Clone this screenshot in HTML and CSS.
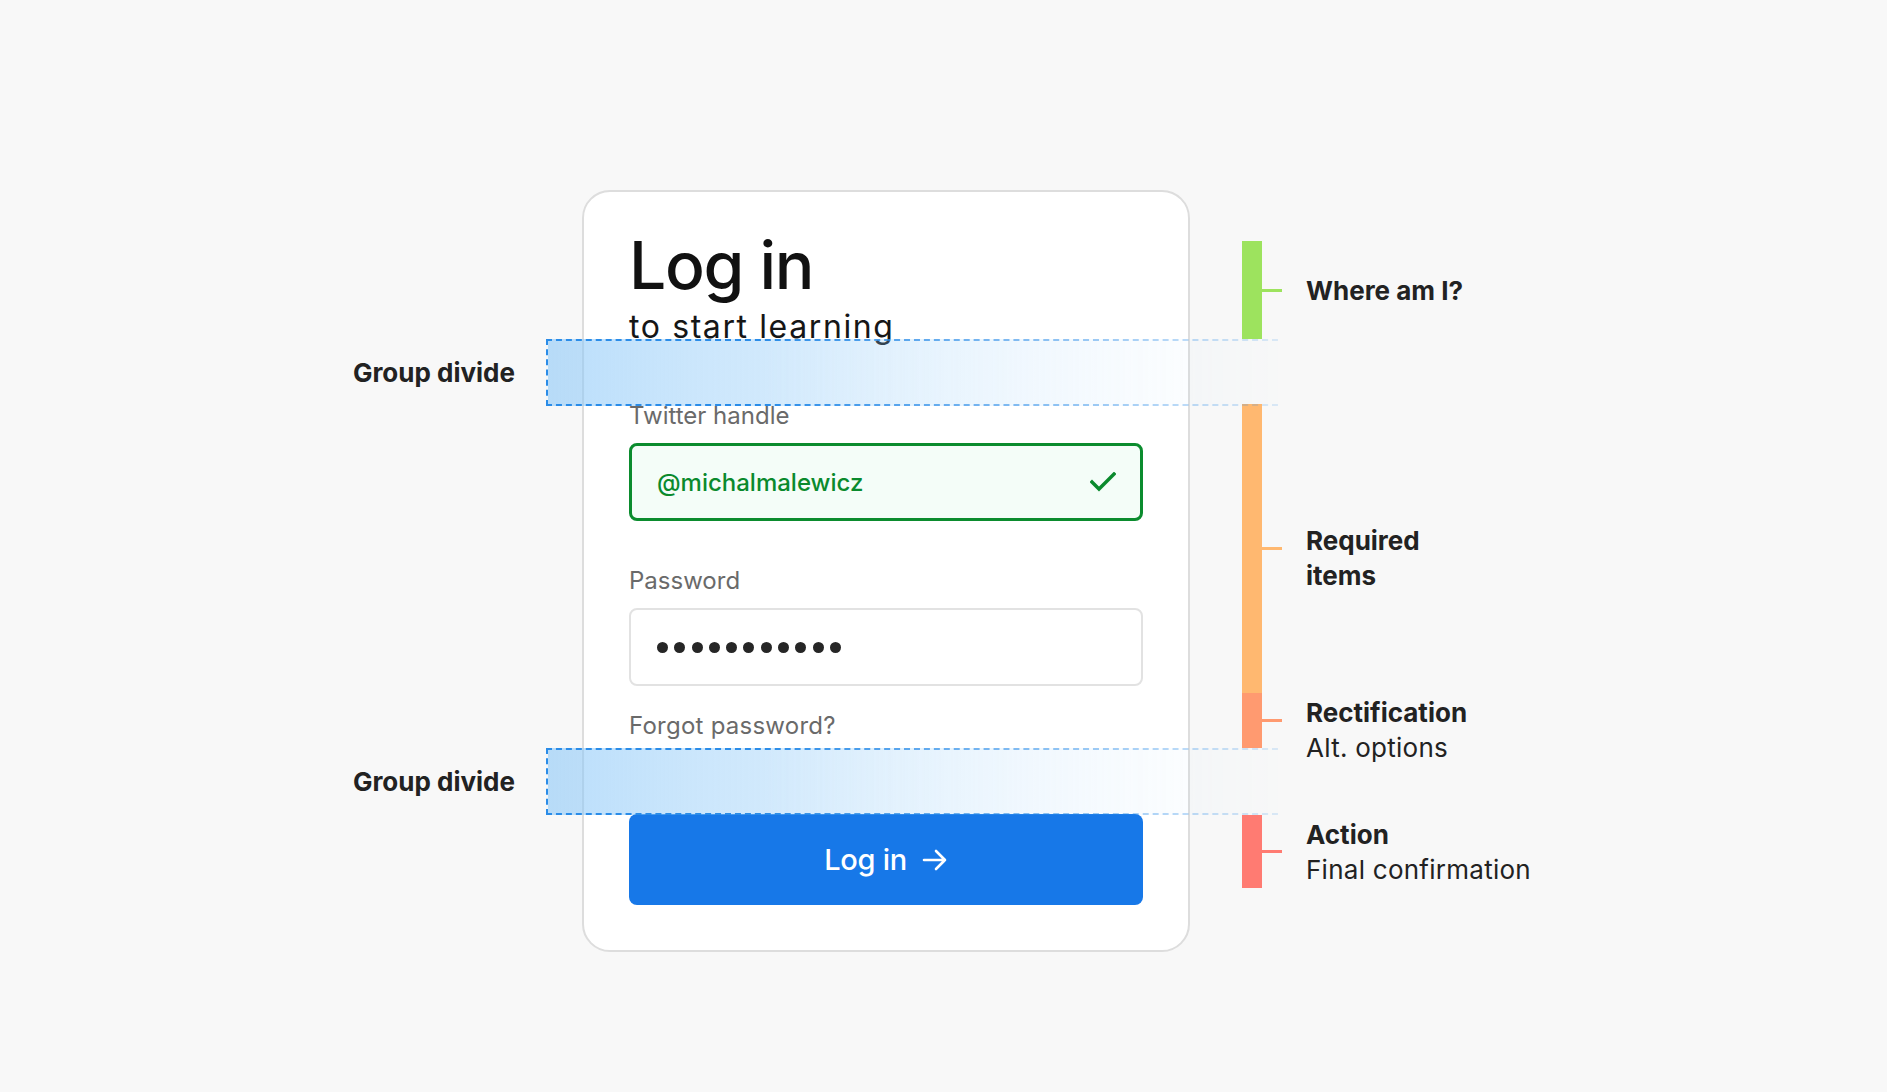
FILE: index.html
```html
<!DOCTYPE html>
<html lang="en">
<head>
  <meta charset="UTF-8" />
  <meta name="viewport" content="width=device-width, initial-scale=1.0" />
  <title>Log in – form anatomy</title>
  <link rel="stylesheet" href="styles.css">
</head>
<body>

<main class="stage">

  <section class="card">
    <h1>Log in</h1>
    <p class="subtitle">to start learning</p>

    <label class="field-label">Twitter handle</label>
    <div class="field valid">
      <span>@michalmalewicz</span>
      <svg class="check" width="26" height="20" viewBox="0 0 26 20">
        <path d="M2 10 L9 17 L24 2" fill="none" stroke="#0a8a2d" stroke-width="3.4" stroke-linecap="square"/>
      </svg>
    </div>

    <label class="field-label pass">Password</label>
    <div class="field">
      <span class="dots">
        <i></i><i></i><i></i><i></i><i></i><i></i><i></i><i></i><i></i><i></i><i></i>
      </span>
    </div>

    <a class="forgot" href="#">Forgot password?</a>

    <button class="btn">
      Log in
      <svg width="26" height="22" viewBox="0 0 26 22">
        <path d="M2 11 H23 M14 2 L23 11 L14 20" fill="none" stroke="#fff" stroke-width="2.6" stroke-linecap="round" stroke-linejoin="round"/>
      </svg>
    </button>
  </section>

  <!-- annotations on the right -->
  <aside class="notes">
    <div class="seg green">
      <div class="bar"></div><div class="tick"></div>
      <div class="note"><b>Where am I?</b></div>
    </div>
    <div class="gap gap-1"></div>
    <div class="seg orange">
      <div class="bar"></div><div class="tick"></div>
      <div class="note shift"><b>Required<br>items</b></div>
    </div>
    <div class="seg coral">
      <div class="bar"></div><div class="tick"></div>
      <div class="note shift"><b>Rectification</b><br>Alt. options</div>
    </div>
    <div class="gap gap-2"></div>
    <div class="seg red">
      <div class="bar"></div><div class="tick"></div>
      <div class="note"><b>Action</b><br>Final confirmation</div>
    </div>
  </aside>

  <!-- group divide overlays -->
  <div class="divide divide-top">
    <span class="divide-label">Group divide</span>
    <div class="band"></div>
  </div>
  <div class="divide divide-bottom">
    <span class="divide-label">Group divide</span>
    <div class="band"></div>
  </div>

</main>

</body>
</html>
```

FILE: styles.css
```css
body {
  margin: 0;
  background: #f8f8f8;
  font-family: Inter, "Noto Sans", sans-serif;
  color: #1e1e1e;
}

.stage {
  position: relative;
  display: flex;
  align-items: flex-start;
  gap: 52px;
  padding: 190px 0 0 582px;
  height: 902px;
}

/* card */

.card {
  box-sizing: border-box;
  width: 608px;
  height: 762px;
  background: white;
  border: 2px solid #dddddd;
  border-radius: 28px;
  padding: 40px 45px 44px;
  display: flex;
  flex-direction: column;
}

.card h1 {
  margin: 0;
  font-size: 66px;
  line-height: 66px;
  font-weight: 500;
  letter-spacing: -0.02em;
  color: #111;
}

.subtitle {
  margin: 10px 0 0;
  font-size: 32px;
  line-height: 38px;
  letter-spacing: 0.05em;
  color: #161616;
}

.field-label {
  margin-top: 55px;
  font-size: 24px;
  line-height: 30px;
  color: #6a6a6a;
  letter-spacing: 0;
}

.field-label.pass {
  margin-top: 45px;
}

.field {
  box-sizing: border-box;
  margin-top: 12px;
  height: 78px;
  border: 2px solid #e2e2e2;
  border-radius: 8px;
  padding: 0 26px;
  display: flex;
  align-items: center;
  justify-content: space-between;
  font-size: 24px;
}

.field.valid {
  border: 3px solid #0b8c2e;
  background: #f4fdf8;
  color: #0a8a2d;
  font-weight: 500;
  padding: 0 25px;
}

.check {
  margin-right: -1px;
}

.dots {
  display: flex;
  gap: 6.3px;
}

.dots i {
  width: 11px;
  height: 11px;
  border-radius: 50%;
  background: #262626;
}

.forgot {
  margin-top: 25px;
  font-size: 24px;
  line-height: 30px;
  color: #6a6a6a;
  text-decoration: none;
  letter-spacing: 0.01em;
}

.btn {
  margin-top: 73px;
  height: 91px;
  border: none;
  border-radius: 8px;
  background: #1778e8;
  color: white;
  font-family: inherit;
  font-size: 29px;
  font-weight: 500;
  letter-spacing: -0.01em;
  display: flex;
  align-items: center;
  justify-content: center;
  gap: 15px;
}

/* annotations */

.notes {
  margin-top: 51px;
  display: flex;
  flex-direction: column;
}

.seg {
  display: flex;
  align-items: center;
}

.seg.green  { height: 98px; }
.seg.orange { height: 289px; }
.seg.coral  { height: 55px; }
.seg.red    { height: 73px; }

.gap-1 { height: 65px; }
.gap-2 { height: 67px; }

.bar {
  align-self: stretch;
  width: 20px;
}

.tick {
  width: 20px;
  height: 3px;
}

.green .bar, .green .tick   { background: #9de35e; }
.orange .bar, .orange .tick { background: #ffb870; }
.coral .bar, .coral .tick   { background: #ff9a70; }
.red .bar, .red .tick       { background: #ff7b72; }

.note {
  margin-left: 24px;
  font-size: 26px;
  line-height: 35px;
  color: #222;
  white-space: nowrap;
  letter-spacing: 0.01em;
}

.note b {
  font-weight: 700;
  letter-spacing: 0;
}

.note.shift {
  padding-top: 18px;
}

/* group divide overlays */

.divide {
  position: absolute;
  left: 300px;
  display: flex;
  align-items: center;
  gap: 31px;
}

.divide-top    { top: 339px; }
.divide-bottom { top: 748px; }

.divide-label {
  width: 215px;
  text-align: right;
  font-size: 26px;
  font-weight: 700;
  letter-spacing: 0;
  color: #222;
}

.band {
  box-sizing: border-box;
  width: 732px;
  height: 67px;
  border: 2px dashed #2a8ce8;
  border-right: none;
  background: linear-gradient(90deg, rgba(140, 200, 248, 0.6), rgba(140, 200, 248, 0.45) 20%, rgba(140, 200, 248, 0.2) 70%, rgba(140, 200, 248, 0.05));
  -webkit-mask-image: linear-gradient(90deg, #000 30%, rgba(0, 0, 0, 0.35) 85%, rgba(0, 0, 0, 0.15));
  mask-image: linear-gradient(90deg, #000 30%, rgba(0, 0, 0, 0.35) 85%, rgba(0, 0, 0, 0.15));
}
```
